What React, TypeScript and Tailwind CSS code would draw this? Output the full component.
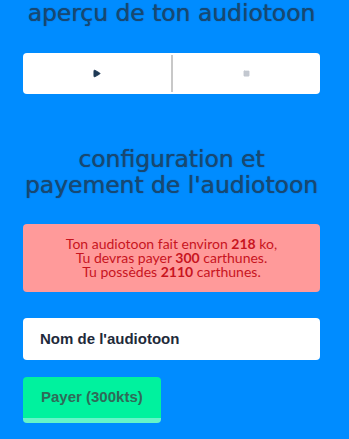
import { Play, Square } from 'lucide-react'

const titre = 'text-center text-[23.4px] leading-[26.5px] text-[#1a4870] [text-shadow:0_0_1px_rgba(0,20,40,0.6)] [font-family:"DejaVu_Sans",Verdana,sans-serif]'

export default function App() {
  return (
    <div className="min-h-[439px] bg-[#008cff] pl-[23px] pr-[29px]">
      {/* APERCU */}
      <h1 className={titre}>aperçu de ton audiotoon</h1>

      <div className="mt-[26px] flex h-[41px] rounded-[4px] bg-white">
        <button className="flex flex-1 items-center justify-center">
          <Play size={9} className="fill-[#1e3a55] text-[#1e3a55]" />
        </button>
        <div className="my-[2px] w-[2px] bg-[#c8c8c8]" />
        <button className="flex flex-1 items-center justify-center">
          <Square size={7} className="fill-[#c3c8d0] text-[#c3c8d0]" />
        </button>
      </div>

      {/* CONFIGURATION */}
      <h2 className={titre + ' mt-[52px] whitespace-nowrap'}>
        configuration et
        <br />
        payement de l'audiotoon
      </h2>

      <div className="mt-[25px] rounded-[4px] bg-[#ff9a9a] py-[13px] text-center text-[14px] leading-[14px] text-[#c8141e] [font-family:Lato,sans-serif]">
        Ton audiotoon fait environ <b>218</b> ko,
        <br />
        Tu devras payer <b>300</b> carthunes.
        <br />
        Tu possèdes <b>2110</b> carthunes.
      </div>

      <input
        placeholder="Nom de l'audiotoon"
        className="mt-[26px] block h-[42px] w-full rounded-[4px] bg-white px-[17px] text-[15px] font-bold text-[#1e2a3a] outline-none placeholder:text-[#1e2a3a] [font-family:'Liberation_Sans',Arial,sans-serif]"
      />

      <button className="mt-[17px] h-[46px] rounded-[4px] border-b-[5px] border-[#66f5c8] bg-[#00f29e] px-[18px] text-[15px] font-bold text-[#2f6b58] [font-family:'Liberation_Sans',Arial,sans-serif]">
        Payer (300kts)
      </button>
    </div>
  )
}
